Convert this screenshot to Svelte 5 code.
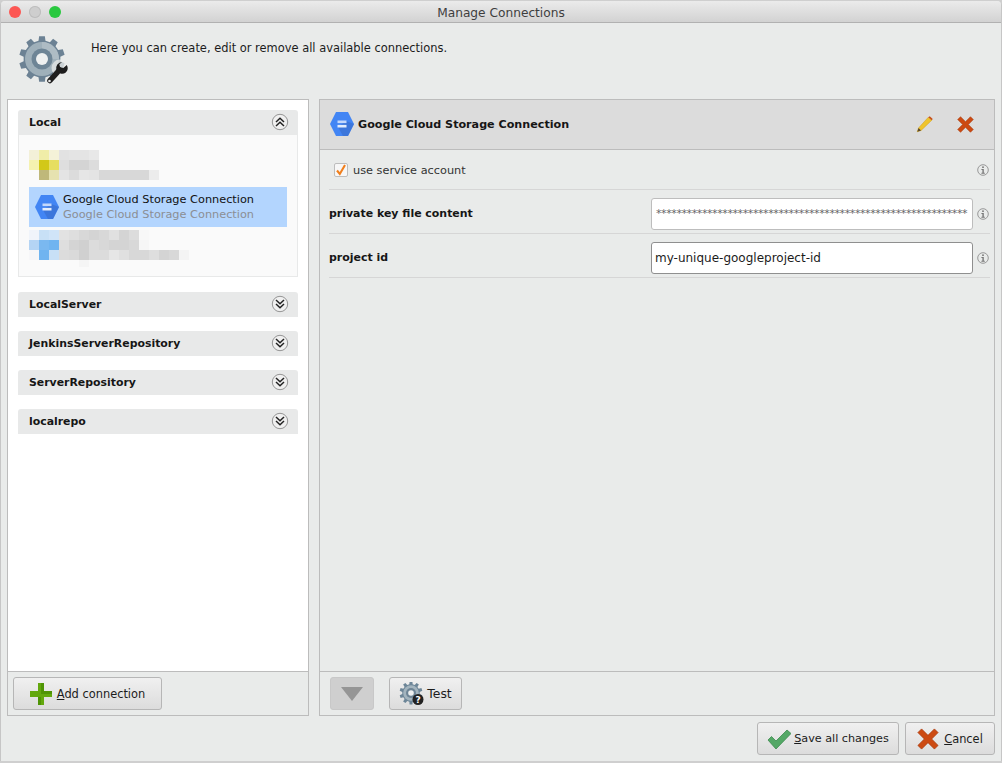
<script>
  function gear(cx, cy, ro, ri, n) {
    const pts = [];
    const step = (Math.PI * 2) / n;
    for (let i = 0; i < n; i++) {
      const a = i * step - Math.PI / 2;
      const w = step * 0.2;
      const v = step * 0.3;
      [[-v, ri], [-w, ro], [w, ro], [v, ri]].forEach(([d, r]) => {
        pts.push((cx + r * Math.cos(a + d)).toFixed(2) + ',' + (cy + r * Math.sin(a + d)).toFixed(2));
      });
    }
    return pts.join(' ');
  }

  const blur1 = [
    ['#f3f0d8', '#f0eda8', '#f4f2d8', '#e2e2e2', '#e4e4e4', '#e4e4e4', '#e8e8e8'],
    ['#f5f2b0', '#d2c818', '#e6de60', '#dedede', '#d4d4d4', '#d4d4d4', '#dcdcdc'],
    ['#fafafa', '#bfb87a', '#e6e2b0', '#e4e4e4', '#dcdcdc', '#e6e6e6', '#e4e4e4', '#d8d8d8', '#d8d8d8', '#d8d8d8', '#d8d8d8', '#d8d8d8', '#ececec']
  ];
  const blur2 = [
    ['#f0f4fa', '#c8e0f6', '#d0e4f8', '#e2e2e2', '#dedede', '#d8d8d8', '#d4d4d4', '#d8d8d8', '#e0e0e0', '#d4d4d4', '#dcdcdc', '#f8f8f8'],
    ['#b4d4f4', '#7ab8f0', '#70b4f0', '#dedede', '#d4d4d4', '#d0d0d0', '#dcdcdc', '#d8d8d8', '#d4d4d4', '#d4d4d4', '#d8d8d8', '#f6f6f6'],
    ['#f6f6f8', '#70b4f0', '#c8e0f6', '#dcdcdc', '#dadada', '#d0d0d0', '#dcdcdc', '#dcdcdc', '#e6e6e6', '#e0e0e0', '#d8d8d8', '#d8d8d8', '#dedede', '#d4d4d4', '#d8d8d8', '#f4f4f4'],
    ['#fafafa', '#fafafa', '#fafafa', '#fafafa', '#fafafa', '#f5f5f5']
  ];
  const groups = ['LocalServer', 'JenkinsServerRepository', 'ServerRepository', 'localrepo'];
  const stars = '*'.repeat(61);
</script>

<svg class="defs" width="0" height="0" aria-hidden="true">
  <defs>
    <symbol id="hex" viewBox="0 0 24 24">
      <polygon points="0,12 6,0 18,0 24,12 18,24 6,24" fill="#4285f4" />
      <polygon points="8,15 16,9 24,12 18,24 13,24" fill="#3a6fd0" opacity=".7" />
      <rect x="7.5" y="8.5" width="9" height="2.6" fill="#c4d8fb" />
      <rect x="7.5" y="12.9" width="9" height="2.6" fill="#e3edfd" />
    </symbol>
    <symbol id="cross" viewBox="0 0 24 24">
      <path d="M5 1 L12 8 L19 1 L23 5 L16 12 L23 19 L19 23 L12 16 L5 23 L1 19 L8 12 L1 5 Z" fill="#cc4a12" stroke="#a93a0c" stroke-width=".8" />
    </symbol>
    <symbol id="info" viewBox="0 0 12 12">
      <circle cx="6" cy="6" r="5.3" fill="none" stroke="#8f8f8f" stroke-width=".9" />
      <rect x="5.2" y="2.4" width="1.6" height="1.6" fill="#777" />
      <path d="M4.4 5h2.4v3.8h1v.9H4.4v-.9h1V5.9h-1z" fill="#777" />
    </symbol>
    <symbol id="up" viewBox="0 0 18 18">
      <circle cx="9" cy="9" r="7.7" fill="#f0f0f0" stroke="#8a8a8a" stroke-width=".9" />
      <path d="M5 9 L9 5.2 L13 9 M5 13 L9 9.2 L13 13" fill="none" stroke="#222" stroke-width="1.5" />
    </symbol>
    <symbol id="down" viewBox="0 0 18 18">
      <circle cx="9" cy="9" r="7.7" fill="#f0f0f0" stroke="#8a8a8a" stroke-width=".9" />
      <path d="M5 5 L9 8.8 L13 5 M5 9 L9 12.8 L13 9" fill="none" stroke="#222" stroke-width="1.5" />
    </symbol>
  </defs>
</svg>

<div class="window">
  <header class="titlebar">
    <span class="light red"></span>
    <span class="light grey"></span>
    <span class="light green"></span>
    <span class="title">Manage Connections</span>
  </header>

  <div class="intro">
    <svg class="bigicon" width="52" height="52" viewBox="0 0 52 52">
      <polygon points={gear(24, 24, 23, 18.5, 10)} fill="#6c8294" />
      <circle cx="24" cy="24" r="17" fill="#9fb0ba" />
      <path d="M24 7 A17 17 0 0 1 41 24 L24 24 Z" fill="#aebcc4" />
      <circle cx="24" cy="24" r="10.5" fill="#6e8596" />
      <circle cx="24" cy="24" r="6" fill="#eef0f0" />
      <circle cx="42" cy="33" r="8.5" fill="#e9ebea" opacity=".75" />
      <path d="M32 45.5 L41.5 35" stroke="#1d1d1d" stroke-width="5.5" stroke-linecap="round" fill="none" />
      <path d="M44.2 27 a6.2 6.2 0 0 0 -5.8 8 a6.2 6.2 0 0 0 9.4 2.4 a6.2 6.2 0 0 0 1 -7.4 l-3.5 3 -3.2 -.8 -.8 -3 z" fill="#1d1d1d" />
      <circle cx="31.5" cy="46" r="1.3" fill="#e9eaea" />
    </svg>
    <p>Here you can create, edit or remove all available connections.</p>
  </div>

  <main class="columns">
    <section class="panel left">
      <div class="leftbody">
        <div class="grouphead">
          <b>Local</b>
          <svg width="18" height="18"><use href="#up" /></svg>
        </div>
        <div class="groupbody">
          <div class="item">
            <div class="blur">
              {#each blur1 as row}
                <div class="blurrow">{#each row as c}<i style="background:{c}"></i>{/each}</div>
              {/each}
            </div>
          </div>
          <div class="item selected">
            <svg class="hexsmall" width="24" height="24"><use href="#hex" /></svg>
            <div class="itemtext">
              <span>Google Cloud Storage Connection</span>
              <span class="sub">Google Cloud Storage Connection</span>
            </div>
          </div>
          <div class="item">
            <div class="blur">
              {#each blur2 as row}
                <div class="blurrow">{#each row as c}<i style="background:{c}"></i>{/each}</div>
              {/each}
            </div>
          </div>
        </div>
        {#each groups as g}
          <div class="grouphead closed">
            <b>{g}</b>
            <svg width="18" height="18"><use href="#down" /></svg>
          </div>
        {/each}
      </div>
      <footer class="panelfoot">
        <button class="btn add">
          <svg width="22" height="22" viewBox="0 0 22 22">
            <path d="M8 0h6v8h8v6h-8v8H8v-8H0V8h8z" fill="#63a80e" />
            <path d="M11 0h3v8h8v3H11zM8 14h3v8H8z" fill="#4f9406" />
          </svg>
          <span><u>A</u>dd connection</span>
        </button>
      </footer>
    </section>

    <section class="panel right">
      <div class="righthead">
        <svg width="24" height="24"><use href="#hex" /></svg>
        <b>Google Cloud Storage Connection</b>
        <svg class="pencil" width="17" height="17" viewBox="0 0 20 20">
          <path d="M14.5 1.5 L18.5 5 L6 17 L1.5 18.5 L3 14 Z" fill="#efc42c" stroke="#d39f16" stroke-width=".6" />
          <path d="M14.5 1.5 L16.2 0.2 L19.7 3.6 L18.5 5 Z" fill="#c8501a" />
          <path d="M3 14 L1.5 18.5 L6 17 Z" fill="#5b4a2e" />
        </svg>
        <svg class="del" width="17" height="17"><use href="#cross" /></svg>
      </div>

      <div class="rows">
        <div class="row check">
          <span class="checkbox">
            <svg width="14" height="14" viewBox="0 0 14 14"><path d="M3 7.5 L5.8 11 L11 2" fill="none" stroke="#f07f1d" stroke-width="2.1" /></svg>
          </span>
          <span class="rowlabel">use service account</span>
          <svg class="infoicon" width="12" height="12"><use href="#info" /></svg>
        </div>
        <div class="row">
          <b>private key file content</b>
          <div class="field stars">{stars}</div>
          <svg class="infoicon" width="12" height="12"><use href="#info" /></svg>
        </div>
        <div class="row">
          <b>project id</b>
          <div class="field dark">my-unique-googleproject-id</div>
          <svg class="infoicon" width="12" height="12"><use href="#info" /></svg>
        </div>
      </div>

      <footer class="panelfoot rightfoot">
        <button class="btn arrow" disabled aria-label="More">
          <svg width="22" height="14" viewBox="0 0 22 14">
            <polygon points="0,0 22,0 11,14" fill="#959595" />
          </svg>
        </button>
        <button class="btn test">
          <svg width="26" height="24" viewBox="0 0 26 24">
            <polygon points={gear(12, 11, 11.5, 8.8, 10)} fill="#6d8698" />
            <circle cx="12" cy="11" r="7.8" fill="#a3b4be" />
            <circle cx="12" cy="11" r="5" fill="#6e8596" />
            <circle cx="12" cy="11" r="2.8" fill="#eef0f0" />
            <circle cx="19" cy="17.5" r="5.5" fill="#222" />
            <text x="19" y="21" class="q">?</text>
          </svg>
          <span>Test</span>
        </button>
      </footer>
    </section>
  </main>

  <footer class="actions">
    <button class="btn save">
      <svg width="24" height="20" viewBox="0 0 24 20">
        <path d="M1 11 L4.5 7.5 L9 12 L20 1 L24 4.5 L9 20 Z" fill="#54a866" stroke="#3c8a4e" stroke-width=".8" />
      </svg>
      <span><u>S</u>ave all changes</span>
    </button>
    <button class="btn cancel">
      <svg width="22" height="22"><use href="#cross" /></svg>
      <span><u>C</u>ancel</span>
    </button>
  </footer>
</div>

<style>
  :global(body) {
    margin: 0;
    background: #cfcfcf;
  }
  .defs {
    position: absolute;
  }
  .window {
    width: 1000px;
    height: 760px;
    margin: 1px 0 0 1px;
    box-sizing: border-box;
    background: #e9ebea;
    font-family: "DejaVu Sans", sans-serif;
    font-size: 11.4px;
    color: #1c1c1c;
    display: flex;
    flex-direction: column;
    border-radius: 4px 4px 0 0;
    box-shadow: 0 1px 1px #777;
    overflow: hidden;
  }
  .titlebar {
    height: 22px;
    flex: none;
    box-sizing: border-box;
    display: flex;
    align-items: center;
    gap: 8px;
    padding-left: 8px;
    position: relative;
    background: linear-gradient(#ebebeb, #d2d2d2);
    border-bottom: 1px solid #b1b1b1;
  }
  .light {
    width: 12px;
    height: 12px;
    border-radius: 50%;
  }
  .red { background: #fc5753; }
  .grey { background: #cecece; box-shadow: inset 0 0 0 1px #bdbdbd; }
  .green { background: #29c83f; }
  .title {
    position: absolute;
    left: 0;
    right: 0;
    text-align: center;
    color: #3e3e3e;
    font-size: 12.2px;
    padding-top: 2px;
  }
  .intro {
    height: 76px;
    flex: none;
    box-sizing: border-box;
    display: flex;
    align-items: flex-start;
    padding: 12px 0 0 17px;
  }
  .bigicon {
    flex: none;
  }
  .intro p {
    margin: 6px 0 0 21px;
    font-size: 11.45px;
  }
  .columns {
    display: flex;
    gap: 10px;
    padding-left: 6px;
    height: 617px;
    flex: none;
  }
  .panel {
    box-sizing: border-box;
    border: 1px solid #bcbcbc;
    display: flex;
    flex-direction: column;
  }
  .left {
    width: 302px;
  }
  .right {
    width: 676px;
  }
  .leftbody {
    flex: 1;
    background: #fff;
    padding: 10px;
    display: flex;
    flex-direction: column;
    align-items: stretch;
  }
  .grouphead {
    height: 25px;
    flex: none;
    box-sizing: border-box;
    background: #e8e9e9;
    border-radius: 3px 3px 0 0;
    display: flex;
    align-items: center;
    justify-content: space-between;
    padding: 0 9px 0 11px;
  }
  .grouphead svg {
    margin-top: -1px;
  }
  .grouphead b {
    color: #161616;
    font-size: 10.9px;
  }
  .closed {
    margin-bottom: 14px;
  }
  .groupbody {
    height: 142px;
    box-sizing: border-box;
    flex: none;
    background: #fafafa;
    border: solid #e8e9e9;
    border-width: 0 1px 1px;
    padding: 12px 10px 10px;
    margin-bottom: 15px;
  }
  .item {
    height: 40px;
    box-sizing: border-box;
    display: flex;
    align-items: center;
    overflow: hidden;
  }
  .item:first-child,
  .item:last-child {
    align-items: flex-start;
    padding-top: 3px;
  }
  .selected {
    background: #b3d5fe;
  }
  .hexsmall {
    margin: 0 4px 0 6px;
    flex: none;
  }
  .itemtext {
    display: flex;
    flex-direction: column;
    line-height: 15px;
    color: #111;
    font-size: 11.3px;
  }
  .sub {
    color: #8b8e94;
  }
  .blurrow {
    display: flex;
    height: 10px;
  }
  .blurrow i {
    display: block;
    width: 10px;
    height: 10px;
    flex: none;
  }
  .panelfoot {
    height: 44px;
    flex: none;
    box-sizing: border-box;
    border-top: 1px solid #bcbcbc;
    padding: 5px;
    display: flex;
    gap: 15px;
    background: #e9ebea;
  }
  .rightfoot {
    padding-left: 10px;
  }
  .btn {
    height: 33px;
    box-sizing: border-box;
    border: 1px solid #b6b6b6;
    border-radius: 3px;
    background: linear-gradient(#f0f0f0, #dcdcdc);
    display: flex;
    align-items: center;
    justify-content: center;
    font: inherit;
    color: #1c1c1c;
    padding: 0;
  }
  .add {
    width: 149px;
    gap: 5px;
  }
  .arrow {
    width: 44px;
    background: #cfcfcf;
    border-color: #c8c8c8;
  }
  .test {
    width: 73px;
    gap: 2px;
    font-size: 12.4px;
  }
  .q {
    font-size: 9px;
    font-weight: bold;
    fill: #fff;
    text-anchor: middle;
  }
  .righthead {
    height: 50px;
    flex: none;
    box-sizing: border-box;
    background: #dcdcdc;
    border-bottom: 1px solid #bcbcbc;
    display: flex;
    align-items: center;
    padding: 0 20px 0 10px;
  }
  .righthead b {
    margin-left: 4px;
    flex: 1;
    color: #161616;
    font-size: 11.15px;
  }
  .righthead svg {
    margin-bottom: 1px;
  }
  .pencil {
    margin-right: 24px;
  }
  .rows {
    flex: 1;
    padding: 0 4px 0 9px;
  }
  .row {
    height: 44px;
    box-sizing: border-box;
    border-bottom: 1px solid #d6d6d6;
    padding-top: 4px;
    display: flex;
    align-items: center;
  }
  .row.check {
    height: 40px;
    padding-top: 1px;
  }
  .row b {
    flex: 1;
    color: #161616;
    font-size: 10.95px;
  }
  .checkbox {
    width: 14px;
    height: 14px;
    margin-left: 5px;
    box-sizing: border-box;
    border: 1px solid #bdbdbd;
    background: #f7f7f7;
    display: flex;
    align-items: center;
    justify-content: center;
    border-radius: 2px;
    overflow: visible;
  }
  .checkbox svg {
    flex: none;
  }
  .rowlabel {
    flex: 1;
    margin-left: 5px;
    color: #333;
    font-size: 11.3px;
  }
  .field {
    width: 322px;
    height: 32px;
    box-sizing: border-box;
    background: #fff;
    border: 1px solid #bdbdbd;
    border-radius: 3px;
    display: flex;
    align-items: center;
    padding-left: 3px;
    overflow: hidden;
    white-space: nowrap;
    font-size: 12px;
  }
  .stars {
    color: #666;
    font-size: 11px;
    letter-spacing: -0.4px;
    padding-left: 4px;
  }
  .dark {
    border-color: #8f8f8f;
    color: #1c1c1c;
  }
  .infoicon {
    margin-left: 4px;
    margin-right: 1px;
    flex: none;
  }
  .actions {
    flex: 1;
    display: flex;
    justify-content: flex-end;
    gap: 6px;
    padding: 6px 6px 0 0;
  }
  .save {
    width: 142px;
    gap: 3px;
    font-size: 11.2px;
  }
  .cancel {
    width: 90px;
    gap: 5px;
  }
  u {
    text-underline-offset: 1px;
  }
</style>
